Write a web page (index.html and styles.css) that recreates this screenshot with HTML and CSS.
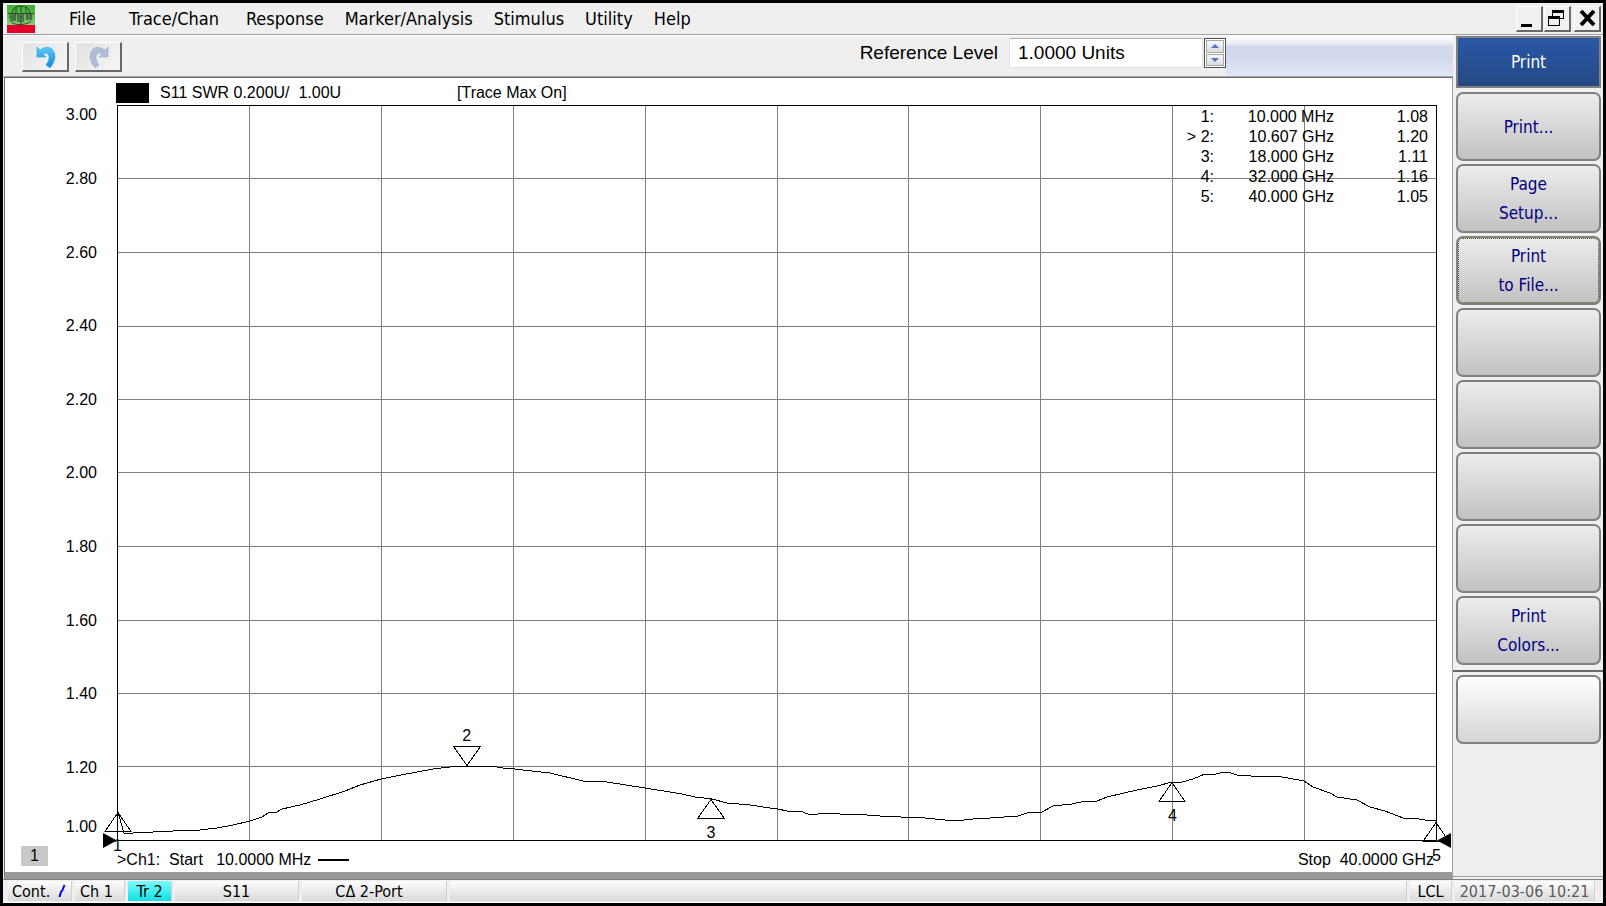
FILE: index.html
```html
<!DOCTYPE html>
<html lang="en">
<head>
<meta charset="utf-8">
<title>Network Analyzer</title>
<link rel="stylesheet" href="styles.css">
</head>
<body>
<div class="app">
  <header class="menubar">
    <svg class="app-icon" width="28" height="28" viewBox="0 0 28 28" aria-hidden="true">
      <defs><linearGradient id="leaf" x1="0" y1="0" x2="0" y2="1"><stop offset="0" stop-color="#3fae35"/><stop offset="0.5" stop-color="#6cbf58"/><stop offset="1" stop-color="#b9dca8"/></linearGradient></defs>
      <rect width="28" height="28" rx="1" fill="url(#leaf)"/>
      <rect y="20" width="28" height="8" fill="#e4002b"/>
      <g fill="none" stroke="#1f4a22" stroke-width="1">
        <path d="M5 8Q6 1 14 1T23 8M1 8.500H27M4 16Q6 20 14 19.500T24 16M9 2V8M19 2V8M14 1V20"/>
      </g>
      <path d="M3 9h6v7H3zM10 8h7v9h-7zM19 8h6v7h-6z" fill="#24452a" opacity=".6"/>
      <path d="M7 9.500Q3 9 3 12T7 15M12 9V15Q16 15 16 12T12 9M22 9V15" fill="none" stroke="#55785a" stroke-width="2"/>
    </svg>
    <nav class="menus">
      <button class="menu menu-file">File</button>
      <button class="menu menu-trace">Trace/Chan</button>
      <button class="menu">Response</button>
      <button class="menu">Marker/Analysis</button>
      <button class="menu">Stimulus</button>
      <button class="menu">Utility</button>
      <button class="menu">Help</button>
    </nav>
    <div class="window-controls">
      <button class="win" aria-label="Minimize"><svg width="24" height="22" viewBox="0 0 24 22"><path d="M4 17h11v3H4z"/></svg></button>
      <button class="win" aria-label="Restore"><svg width="24" height="22" viewBox="0 0 24 22" shape-rendering="crispEdges"><path d="M7 3h12v9h-4v-1h3V6H8v3H7zM3 9h12v10H3zM4 12v6h10v-6z" fill-rule="evenodd"/></svg></button>
      <button class="win win-close" aria-label="Close"><svg width="24" height="22" viewBox="0 0 24 22"><path d="M6 4L19 18M19 4L6 18" stroke="#000" stroke-width="4"/></svg></button>
    </div>
  </header>
  <div class="body">
    <main class="workspace">
      <div class="toolbar">
        <button class="tool" aria-label="Undo"><svg width="24" height="24" viewBox="0 0 24 24">
          <defs><linearGradient id="undo" x1="0" y1="0" x2="0" y2="1"><stop offset="0" stop-color="#5cc8fb"/><stop offset="1" stop-color="#1287d6"/></linearGradient></defs>
          <path d="M3 2L6 5Q13 0 18 4Q25 12 16 23L12 20Q17 13 14 9Q12 7 9 9L12 12H3Z" fill="url(#undo)" stroke="#2fa3e6" stroke-width=".6"/></svg></button>
        <button class="tool" aria-label="Redo" disabled><svg width="24" height="24" viewBox="0 0 24 24">
          <path d="M21 2L18 5Q11 0 6 4Q-1 12 8 23L12 20Q7 13 10 9Q12 7 15 9L12 12H21Z" fill="#b0bdd8" stroke="#9dabc8" stroke-width=".6"/></svg></button>
        <label class="ref-label" for="ref-level">Reference Level</label>
        <input class="ref-input" id="ref-level" type="text" value="1.0000 Units">
        <div class="spin">
          <button class="spin-btn" aria-label="Increase"><svg width="8" height="4" viewBox="0 0 8 4"><path d="M0 4L4 0L8 4z"/></svg></button>
          <button class="spin-btn" aria-label="Decrease"><svg width="8" height="4" viewBox="0 0 8 4"><path d="M0 0L4 4L8 0z"/></svg></button>
        </div>
        <div class="toolbar-fill"></div>
      </div>
      <section class="panel">
        <div class="trace-head">
          <span class="swatch"></span>
          <span class="trace-title">S11 SWR 0.200U/&nbsp; 1.00U</span>
          <span>[Trace Max On]</span>
        </div>
        <div class="scale">
          <span>3.00</span><span>2.80</span><span>2.60</span><span>2.40</span><span>2.20</span><span>2.00</span><span>1.80</span><span>1.60</span><span>1.40</span><span>1.20</span><span>1.00</span>
        </div>
        <div class="plot">
          <svg class="graph" viewBox="117 105 1320 736" preserveAspectRatio="none" shape-rendering="crispEdges">
            <path class="grid" d="M249.500 105V841M381.500 105V841M513.500 105V841M645.500 105V841M777.500 105V841M908.500 105V841M1040.500 105V841M1172.500 105V841M1304.500 105V841M117 178.500H1437M117 252.500H1437M117 326.500H1437M117 399.500H1437M117 472.500H1437M117 546.500H1437M117 620.500H1437M117 693.500H1437M117 766.500H1437"/>
            <rect class="frame" x="117.5" y="105.5" width="1319" height="735"/>
            <polyline class="trace" points="118,812 124,833 133,833 173,831 200,830 217,828 233,825 250,821 262,817 268,813 277,812 282,809 300,805 320,799 345,791 360,785 381,779 401,775 417,772 433,769 450,767 467,766 490,766 503,768 515,769 523,770 550,773 583,781 607,782 645,788 682,794 695,797 712,799 727,803 750,805 770,808 778,809 787,811 800,811 808,814 818,814 825,813 840,814 867,815 880,816 890,816 901,817 925,818 945,820 955,821 973,819 990,818 1018,816 1027,813 1042,812 1053,806 1072,804 1085,801 1097,801 1107,797 1137,790 1157,786 1172,782 1182,782 1193,779 1205,774 1213,775 1223,772 1228,772 1237,775 1265,777 1277,776 1304,781 1313,787 1330,793 1337,797 1357,800 1370,807 1385,811 1403,818 1412,818 1425,820 1436,821"/>
          </svg>
          <div class="marker" style="left:0.04%;top:96.1%"><svg width="27" height="20"><path d="M13.500 .5L26.500 19.500H.5Z"/></svg><span>1</span></div>
          <div class="marker above" style="left:26.5%;top:89.8%"><span>2</span><svg width="28" height="20"><path d="M.5 .5H27.500L14 19.500Z"/></svg></div>
          <div class="marker" style="left:45%;top:94.3%"><svg width="28" height="20"><path d="M14 .5L27.500 19.500H.5Z"/></svg><span>3</span></div>
          <div class="marker" style="left:79.95%;top:92%"><svg width="27" height="20"><path d="M13.500 .5L26.500 19.500H.5Z"/></svg><span>4</span></div>
          <div class="marker" style="left:99.96%;top:97.4%"><svg width="27" height="20"><path d="M13.500 .5L26.500 19.500H.5Z"/></svg><span>5</span></div>
          <svg class="ref-arrow ref-left" width="14" height="15"><path d="M0 0L14 7.500L0 15z"/></svg>
          <svg class="ref-arrow ref-right" width="14" height="15"><path d="M14 0L0 7.500L14 15z"/></svg>
          <table class="readout">
            <tr><td>1:</td><td>10.000 MHz</td><td>1.08</td></tr>
            <tr><td>&gt; 2:</td><td>10.607 GHz</td><td>1.20</td></tr>
            <tr><td>3:</td><td>18.000 GHz</td><td>1.11</td></tr>
            <tr><td>4:</td><td>32.000 GHz</td><td>1.16</td></tr>
            <tr><td>5:</td><td>40.000 GHz</td><td>1.05</td></tr>
          </table>
        </div>
        <div class="foot-left"><button class="window-no">1</button></div>
        <div class="sweep">
          <span>&gt;Ch1:&nbsp; Start&nbsp;&nbsp; 10.0000 MHz</span>
          <span class="dash"></span>
          <span class="stop">Stop&nbsp; 40.0000 GHz</span>
        </div>
      </section>
    </main>
    <aside class="softkeys">
      <h1 class="key-title">Print</h1>
      <button class="key">Print...</button>
      <button class="key">Page<br>Setup...</button>
      <button class="key key-focus">Print<br>to File...</button>
      <button class="key" aria-label="Empty key 4"></button>
      <button class="key" aria-label="Empty key 5"></button>
      <button class="key" aria-label="Empty key 6"></button>
      <button class="key" aria-label="Empty key 7"></button>
      <button class="key">Print<br>Colors...</button>
      <hr class="divider">
      <button class="key key-light" aria-label="Empty key 9"></button>
    </aside>
  </div>
  <footer class="status">
    <span class="cell cont">Cont.<svg width="8" height="14" viewBox="0 0 8 14"><path d="M1.500 13L3 8L4.500 6L6.500 1" fill="none" stroke="#00f" stroke-width="2"/></svg></span>
    <span class="cell ch">Ch 1</span>
    <span class="cell tr">Tr 2</span>
    <span class="cell param">S11</span>
    <span class="cell cal">CΔ 2-Port</span>
    <span class="cell fill"></span>
    <span class="cell lcl">LCL</span>
    <span class="cell clock">2017-03-06 10:21</span>
  </footer>
</div>
</body>
</html>
```
FILE: styles.css
```css
* { box-sizing: border-box; }

body {
  margin: 0;
  background: #000;
  font-family: "DejaVu Sans Condensed", "Noto Sans", sans-serif;
  color: #000;
}

button { font: inherit; color: inherit; padding: 0; }

.app {
  min-height: 100vh;
  display: flex;
  flex-direction: column;
  border: 3px solid #000;
  background: #efefef;
}

/* Menu bar */
.menubar {
  display: flex;
  align-items: center;
  height: 32px;
  padding: 0 2px 0 4px;
  border-bottom: 1px solid #a0a0a0;
}
.app-icon { flex: none; }
.menus { display: flex; gap: 21px; margin-left: 34px; }
.menu {
  border: 0;
  background: none;
  font-size: 18px;
  line-height: 28px;
}
.menu-file { margin-right: 12px; }
.menu-trace { margin-right: 6px; }
.window-controls { display: flex; gap: 1px; margin-left: auto; }
.win {
  width: 27px;
  height: 26px;
  border: 1px solid;
  border-width: 1px 2px 2px 1px;
  border-color: #fff #696969 #696969 #fff;
  background: #f0f0f0;
}
.win svg { display: block; }
.win-close { margin-left: 2px; }

.body { flex: 1; display: flex; }
.workspace { flex: 1; min-width: 0; display: flex; flex-direction: column; }

/* Toolbar */
.toolbar {
  display: flex;
  align-items: flex-start;
  height: 42px;
  padding-left: 19px;
  border-top: 1px solid #fff;
  border-bottom: 1px solid #a8a8a8;
}
.tool {
  width: 47px;
  height: 30px;
  margin: 6px 6px 0 0;
  padding-left: 2px;
  border: 1px solid;
  border-width: 1px 2px 2px 1px;
  border-color: #fff #696969 #696969 #fff;
  background: linear-gradient(135deg, #e2e2e2, #f6f6f6);
  display: flex;
  align-items: center;
  justify-content: center;
}
.ref-label {
  margin-left: auto;
  padding-right: 11px;
  font: 19px/34px "Liberation Sans", sans-serif;
}
.ref-input {
  width: 194px;
  height: 30px;
  margin-top: 2px;
  padding: 0 8px;
  border: 1px solid #e2e3ea;
  border-top-color: #abadb3;
  border-radius: 2px;
  background: #fff;
  font: 19px "Liberation Sans", sans-serif;
}
.spin {
  width: 22px;
  height: 30px;
  margin: 2px 0 0 1px;
  padding: 1px;
  border: 1px solid #505050;
  display: flex;
  flex-direction: column;
  gap: 1px;
  background: #fff;
}
.spin-btn {
  flex: 1;
  display: flex;
  align-items: center;
  justify-content: center;
  border: 1px solid #a8a8a8;
  background: linear-gradient(#f6f6f6, #dcdcdc);
}
.spin-btn svg { fill: #5a74c4; }
.toolbar-fill {
  width: 227px;
  height: 40px;
  background: linear-gradient(#fff 0, #e2e7f2 9px, #d2d8ec 10px, #d4daed 24px, #e2e7f6 40px);
}

/* Plot window */
.panel {
  flex: 1;
  display: grid;
  grid-template-columns: 112px minmax(0, 1fr);
  grid-template-rows: 27px minmax(0, 1fr) 31px;
  padding-right: 15px;
  border: 1px solid #696969;
  border-right-color: #a0a0a0;
  border-bottom: 7px solid #999;
  margin-left: 1px;
  background: #fff;
  font: 16px/18px "Liberation Sans", sans-serif;
}
.trace-head { grid-column: 2; display: flex; align-items: center; padding-top: 3px; }
.swatch { width: 33px; height: 20px; margin: 0 11px 0 -1px; background: #000; }
.trace-title { width: 297px; }
.scale {
  display: flex;
  flex-direction: column;
  padding-right: 20px;
  text-align: right;
}
.scale span { flex: 0 0 10%; display: flex; align-items: center; justify-content: flex-end; padding-top: 1px; }
.scale span:first-child { flex-basis: 5%; align-items: flex-start; }
.scale span:last-child { flex-basis: 5%; align-items: flex-end; padding-bottom: 5px; }

.plot { position: relative; }
.graph { position: absolute; width: 100%; height: 100%; }
.grid { stroke: #808080; }
.frame, .trace { fill: none; stroke: #000; }
.grid, .frame, .trace { vector-effect: non-scaling-stroke; }

.marker {
  position: absolute;
  display: flex;
  flex-direction: column;
  align-items: center;
  gap: 8px;
  line-height: 12px;
  transform: translateX(-50%);
}
.marker.above { transform: translate(-50%, -100%); gap: 4px; }
.marker svg { fill: none; stroke: #000; shape-rendering: crispEdges; }
.ref-arrow { position: absolute; bottom: -7px; }
.ref-left { left: -14px; }
.ref-right { right: -14px; }

.readout {
  position: absolute;
  top: 2px;
  right: 9px;
  border-collapse: collapse;
  line-height: 20px;
  text-align: right;
}
.readout td { padding: 0; }
.readout td:nth-child(2) { width: 120px; }
.readout td:nth-child(3) { width: 94px; }

.foot-left { padding: 5px 0 0 16px; }
.window-no {
  display: block;
  width: 27px;
  height: 20px;
  border: 0;
  background: #c8c8c8;
}
.sweep { display: flex; align-items: center; padding: 6px 3px 0 0; line-height: 12px; }
.dash { width: 31px; height: 2px; margin-left: 7px; background: #000; }
.stop { margin-left: auto; }

/* Softkeys */
.softkeys {
  width: 150px;
  display: flex;
  flex-direction: column;
  gap: 3px;
  margin-bottom: 2px;
  padding: 1px 2px 0 3px;
  border-bottom: 1px solid #a0a0a0;
}
.key-title {
  height: 52px;
  margin: 0 0 1px;
  border: 2px solid #808080;
  background: linear-gradient(#2a57a5, #244984);
  color: #fff;
  font-size: 17px;
  font-weight: 400;
  line-height: 48px;
  text-align: center;
}
.key {
  height: 69px;
  padding-top: 1px;
  border: 2px solid #808080;
  border-radius: 7px;
  background: linear-gradient(#ececec, #c2c2c2);
  color: #000080;
  font-size: 17px;
  line-height: 29px;
}
.key-focus { outline: 1px dotted #4c4c00; outline-offset: -3px; }
.divider {
  align-self: stretch;
  height: 2px;
  margin: 2px -2px 0 -3px;
  border: 0;
  background: #696969;
}
.key-light { background: linear-gradient(#fff, #d4d4d4); }

/* Status bar */
.status {
  display: flex;
  gap: 3px;
  height: 24px;
  padding: 1px 8px 1px 5px;
  border-top: 1px solid #808080;
  border-bottom: 1px solid #fff;
  background: #f0eeee;
  font-size: 16px;
  line-height: 21px;
}
.cell {
  border-right: 1px solid #d0d0d0;
  background: linear-gradient(#fdfdfd, #dadada);
  text-align: center;
  white-space: nowrap;
}
.cont { width: 64px; display: flex; align-items: center; justify-content: space-between; padding: 0 5px 0 4px; }
.ch { width: 50px; padding-right: 6px; }
.tr { width: 44px; background: linear-gradient(#7dfbfb, #10e0e4); }
.param { width: 124px; }
.cal { width: 145px; padding-right: 10px; }
.fill { flex: 1; }
.lcl { width: 42px; }
.clock { width: 140px; color: #5c5c5c; }
```
